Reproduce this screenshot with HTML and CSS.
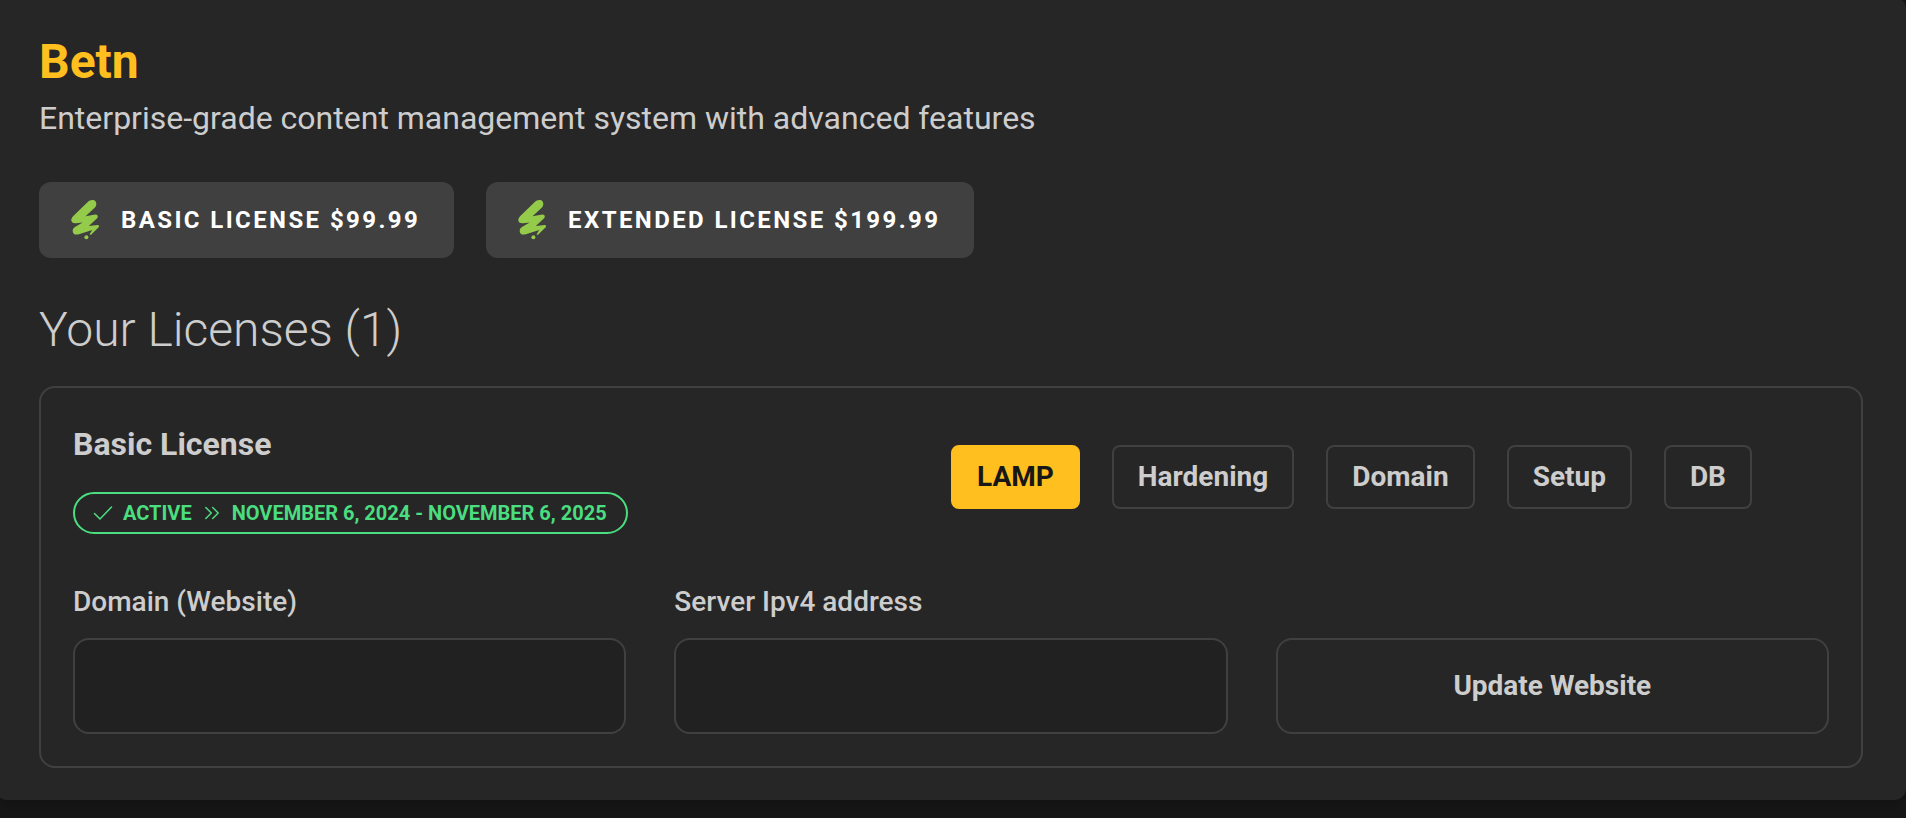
FILE: index.html
```html
<!DOCTYPE html>
<html lang="en">
<head>
<meta charset="utf-8">
<title>Betn</title>
<link rel="stylesheet" href="styles.css">
</head>
<body>
<svg class="defs" width="0" height="0" aria-hidden="true">
  <symbol id="scribble" viewBox="0 0 30 42">
    <path d="M16.500 3.200C19 .8 22.800.2 24.600 2.600c1.400 2.100.6 4.600-1.200 6.400L14.500 17.200l9.800-1.600c2.700-.2 3.300 2.400 1.300 4.200L17.800 27l8.800-1c1.500 0 1.800 1.400.8 2.600l-7.600 7.400-1.200-.8 2.600-4.200-13.300 4.200C4 36.400 1.500 34.600 1.700 31.600c.1-1.500.9-2.700 2.300-3.600l7.600-4.600-6.600.9C1.800 24.700-.3 22.600.4 20c.3-1.100 1-2 1.900-2.900z" fill="currentColor"/>
    <circle cx="15.400" cy="38.300" r="2" fill="currentColor"/>
  </symbol>
</svg>
<main class="panel">
  <header>
    <h1 class="title">Betn</h1>
    <p class="subtitle">Enterprise-grade content management system with advanced features</p>
  </header>
  <div class="plans">
    <button class="plan"><svg class="plan-icon"><use href="#scribble"/></svg>Basic License $99.99</button>
    <button class="plan"><svg class="plan-icon"><use href="#scribble"/></svg>Extended License $199.99</button>
  </div>
  <h2 class="heading">Your Licenses (1)</h2>
  <section class="card">
    <div class="card-top">
      <div class="info">
        <h3 class="name">Basic License</h3>
        <div class="badge">
          <svg class="check" viewBox="0 0 20 16"><path d="M1.500 8.500 7 14 18.500 2"/></svg>
          <span>Active</span>
          <svg class="chevrons" viewBox="0 0 16 14"><path d="M1.800 1.500 7.300 7l-5.500 5.500M8.700 1.500 14.200 7l-5.500 5.500"/></svg>
          <span>November 6, 2024 - November 6, 2025</span>
        </div>
      </div>
      <nav class="tabs">
        <button class="tab tab-active">LAMP</button>
        <button class="tab">Hardening</button>
        <button class="tab">Domain</button>
        <button class="tab">Setup</button>
        <button class="tab">DB</button>
      </nav>
    </div>
    <form class="form">
      <label class="field">Domain (Website)<input class="input" type="text"></label>
      <label class="field">Server Ipv4 address<input class="input" type="text"></label>
      <button class="update" type="button">Update Website</button>
    </form>
  </section>
</main>
</body>
</html>
```
FILE: styles.css
```css
* { box-sizing: border-box; margin: 0; }
body {
  background: #171717;
  color: #cdcdcd;
  font-family: Roboto, "Liberation Sans", sans-serif;
  height: 818px;
  overflow: hidden;
}
button, input { font: inherit; color: inherit; }
.defs { display: block; }
.panel {
  height: 803px;
  margin: -3px 0 0 -5px;
  padding: 36px 43px 0 44px;
  background: #262626;
  border-radius: 12px;
  box-shadow: 0 8px 12px -2px rgba(0, 0, 0, .2);
}
.title { font-size: 48px; line-height: 58px; font-weight: 700; color: #ffbf1f; }
.subtitle { font-size: 32px; line-height: 48px; margin-top: 3px; }
.plans { display: flex; gap: 32px; margin-top: 40px; }
.plan {
  display: flex;
  align-items: center;
  height: 76px;
  padding: 0 34px 0 32px;
  border: 0;
  border-radius: 12px;
  background: #404040;
  color: #fff;
  font-size: 24px;
  font-weight: 700;
  letter-spacing: 2.4px;
  text-transform: uppercase;
}
.plan-icon { width: 30px; height: 42px; margin-right: 20px; color: #95cb4b; }
.heading { font-size: 48px; line-height: 56px; font-weight: 300; margin-top: 44px; }
.card {
  height: 382px;
  margin-top: 28px;
  padding: 32px;
  border: 2px solid #404040;
  border-radius: 16px;
}
.card-top { display: flex; justify-content: space-between; padding-right: 77px; }
.name { font-size: 32px; line-height: 48px; font-weight: 700; }
.badge {
  display: flex;
  align-items: center;
  height: 42px;
  margin-top: 24px;
  padding: 0 19px 0 18px;
  border: 2px solid #4ade80;
  border-radius: 21px;
  color: #4ade80;
  font-size: 20px;
  font-weight: 700;
  text-transform: uppercase;
}
.check, .chevrons { fill: none; stroke: currentColor; stroke-width: 1.5; stroke-linecap: round; stroke-linejoin: round; }
.check { width: 20px; height: 16px; margin-right: 10px; }
.chevrons { width: 16px; height: 14px; margin: 0 12px; }
.tabs { display: flex; gap: 32px; margin-top: 25px; height: 64px; }
.tab {
  padding: 0 24px 2px;
  border: 2px solid #404040;
  border-radius: 8px;
  background: none;
  font-size: 28px;
  font-weight: 700;
}
.tab-active { background: #ffbf1f; border-color: #ffbf1f; color: #171717; }
.form { display: grid; grid-template-columns: repeat(3, 1fr); gap: 48px; align-items: end; margin-top: 48px; }
.field { font-size: 28px; line-height: 40px; font-weight: 500; }
.input, .update {
  display: block;
  width: 100%;
  height: 96px;
  border: 2px solid #404040;
  border-radius: 16px;
}
.input { margin-top: 16px; padding: 0 24px; background: #212121; }
.update { padding-bottom: 2px; background: none; font-size: 28px; font-weight: 700; }
```
